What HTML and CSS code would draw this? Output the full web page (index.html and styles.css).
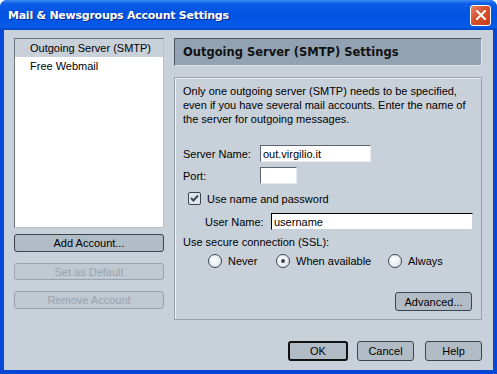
FILE: index.html
```html
<!DOCTYPE html>
<html lang="en">
<head>
  <meta charset="UTF-8" />
  <title>Mail &amp; Newsgroups Account Settings</title>
  <link rel="stylesheet" href="styles.css">
</head>
<body>

  <div class="window">
    <div class="titlebar">
      <span class="title">Mail &amp; Newsgroups Account Settings</span>
      <span class="close-btn" aria-label="Close">
        <svg viewBox="0 0 10 10" width="10" height="10">
          <path d="M1 1 L9 9 M9 1 L1 9" stroke="#fff" stroke-width="2" stroke-linecap="square" />
        </svg>
      </span>
    </div>

    <div class="client">
      <div class="main">
        <!-- account list and its buttons -->
        <div class="left-col">
          <ul class="account-list">
            <li class="selected">Outgoing Server (SMTP)</li>
            <li>Free Webmail</li>
          </ul>
          <button class="btn wide">Add Account...</button>
          <button class="btn wide" disabled>Set as Default</button>
          <button class="btn wide" disabled>Remove Account</button>
        </div>

        <!-- settings panel -->
        <div class="right-col">
          <div class="panel-header">Outgoing Server (SMTP) Settings</div>
          <div class="panel-box">
            <p class="intro">Only one outgoing server (SMTP) needs to be specified, even if you have several mail accounts. Enter the name of the server for outgoing messages.</p>

            <div class="field-row server-row">
              <label class="field-label">Server Name:</label>
              <input class="text-input server-input" type="text" value="out.virgilio.it">
            </div>
            <div class="field-row port-row">
              <label class="field-label">Port:</label>
              <input class="text-input port-input" type="text" value="">
            </div>

            <div class="check-row">
              <span class="checkbox">
                <svg viewBox="0 0 9 9" width="9" height="9">
                  <path d="M1 4 L3.5 6.5 L8 1.5" stroke="#3a4858" stroke-width="2" fill="none" />
                </svg>
              </span>
              <span>Use name and password</span>
            </div>
            <div class="field-row user-row">
              <label class="user-label">User Name:</label>
              <input class="text-input user-input" type="text" value="username">
            </div>

            <div class="ssl-label">Use secure connection (SSL):</div>
            <div class="radio-row">
              <span class="radio-item never"><span class="radio"></span>Never</span>
              <span class="radio-item when"><span class="radio checked"></span>When available</span>
              <span class="radio-item"><span class="radio"></span>Always</span>
            </div>

            <div class="advanced-row">
              <button class="btn advanced">Advanced...</button>
            </div>
          </div>
        </div>
      </div>

      <div class="footer">
        <button class="btn dlg default">OK</button>
        <button class="btn dlg">Cancel</button>
        <button class="btn dlg help">Help</button>
      </div>
    </div>
  </div>

</body>
</html>
```

FILE: styles.css
```css
body {
  margin: 0;
  font-family: 'Liberation Sans', Arial, sans-serif;
  font-size: 11px;
  color: #000;
  background: #fff;
}

.window {
  width: 497px;
  height: 374px;
  display: flex;
  flex-direction: column;
  background: #0846d8;
  box-sizing: border-box;
  padding: 0 4px 4px 4px;
  border-radius: 7px 7px 0 0;
  overflow: hidden;
}

.titlebar {
  height: 30px;
  margin: 0 -4px;
  padding: 0 6px 0 8px;
  display: flex;
  align-items: center;
  justify-content: space-between;
  background: linear-gradient(180deg, #3d8cf5 0%, #0b5ee6 12%, #0253e3 40%, #0457e6 75%, #0a5be4 90%, #0045cc 100%);
}

.title {
  color: #fff;
  font-family: 'DejaVu Sans', sans-serif;
  font-weight: bold;
  font-size: 11px;
  letter-spacing: -0.25px;
  text-shadow: 1px 1px 0 #0a2a8a;
}

.close-btn {
  width: 21px;
  height: 21px;
  box-sizing: border-box;
  border: 1px solid #fff;
  border-radius: 3px;
  background: linear-gradient(135deg, #e8836a 0%, #d8502c 45%, #c83e1c 100%);
  display: flex;
  align-items: center;
  justify-content: center;
}

.client {
  flex: 1;
  background: #c8d0d9;
  padding: 8px 11px 9px 10px;
  display: flex;
  flex-direction: column;
}

.main {
  display: flex;
  gap: 10px;
  height: 282px;
}

.left-col {
  width: 150px;
  display: flex;
  flex-direction: column;
}

.account-list {
  list-style: none;
  margin: 0 0 6px 0;
  padding: 0;
  height: 194px;
  box-sizing: border-box;
  background: #fff;
  border: 1px solid #6a747e;
  border-right-color: #b8c0c8;
  border-bottom-color: #b8c0c8;
}

.account-list li {
  height: 18px;
  line-height: 18px;
  padding-left: 15px;
}

.account-list li.selected {
  background: #c8d0d9;
}

.btn {
  font-family: 'Liberation Sans', Arial, sans-serif;
  font-size: 11px;
  color: #000;
  background: #b2bcc7;
  border: 1px solid #3a4450;
  border-radius: 3px;
  padding: 0;
  height: 18px;
  box-sizing: border-box;
}

.btn:disabled {
  color: #98a4b0;
  border-color: #9aa4ae;
  background: #c0c8d1;
}

.btn.wide {
  width: 150px;
  margin-bottom: 11px;
}

.right-col {
  width: 308px;
  display: flex;
  flex-direction: column;
  gap: 11px;
}

.panel-header {
  height: 28px;
  box-sizing: border-box;
  background: #92a2b3;
  border: 1px solid #4c5662;
  border-right-color: #e4e8ec;
  border-bottom-color: #e4e8ec;
  padding-left: 8px;
  display: flex;
  align-items: center;
  font-family: 'DejaVu Sans', sans-serif;
  font-weight: bold;
  font-size: 11.5px;
  color: #111;
}

.panel-box {
  flex: 1;
  box-sizing: border-box;
  border: 1px solid #98a2ac;
  box-shadow: inset 1px 1px 0 #eef1f4;
  padding: 6px 8px 0 8px;
  display: flex;
  flex-direction: column;
}

.intro {
  margin: 0;
  line-height: 14px;
  width: 296px;
}

.field-row {
  display: flex;
  align-items: center;
}

.field-label {
  width: 77px;
}

.text-input {
  font-family: 'Liberation Sans', Arial, sans-serif;
  font-size: 11px;
  height: 17px;
  box-sizing: border-box;
  border: 1px solid #5c6670;
  border-right-color: #e8ecf0;
  border-bottom-color: #e8ecf0;
  padding: 0 2px;
  margin: 0;
  background: #fff;
}

.server-row {
  margin-top: 19px;
}

.server-input {
  width: 111px;
}

.port-row {
  margin-top: 5px;
}

.port-input {
  width: 37px;
}

.check-row {
  display: flex;
  align-items: center;
  gap: 6px;
  margin-top: 8px;
  padding-left: 5px;
}

.checkbox {
  width: 13px;
  height: 13px;
  box-sizing: border-box;
  border: 1px solid #3a4450;
  border-radius: 2px;
  background: #e0e6ec;
  display: flex;
  align-items: center;
  justify-content: center;
}

.user-row {
  margin-top: 8px;
  padding-left: 22px;
}

.user-label {
  width: 66px;
}

.user-input {
  width: 202px;
  border: 1px solid #000;
  border-right-color: #c8d0d9;
  border-bottom-color: #c8d0d9;
}

.ssl-label {
  margin-top: 6px;
}

.radio-row {
  display: flex;
  margin-top: 6px;
  padding-left: 25px;
}

.radio-item {
  display: flex;
  align-items: center;
  gap: 6px;
}

.radio-item.never {
  width: 68px;
}

.radio-item.when {
  width: 112px;
}

.radio {
  width: 14px;
  height: 14px;
  box-sizing: border-box;
  border: 1px solid #3a4450;
  border-radius: 50%;
  background: radial-gradient(circle at 40% 40%, #ffffff 0%, #e6ecf0 60%, #c4ccd4 100%);
  display: flex;
  align-items: center;
  justify-content: center;
}

.radio.checked::after {
  content: "";
  width: 4px;
  height: 4px;
  border-radius: 50%;
  background: #3a4450;
}

.advanced-row {
  margin-top: auto;
  margin-bottom: 8px;
  display: flex;
  justify-content: flex-end;
}

.btn.advanced {
  width: 77px;
  height: 19px;
  margin-right: 1px;
}

.footer {
  margin-top: auto;
  display: flex;
  justify-content: flex-end;
  gap: 9px;
}

.btn.dlg {
  width: 57px;
  height: 20px;
}

.btn.default {
  width: 60px;
  border-width: 2px;
  border-color: #111;
}

.btn.help {
  margin-left: 2px;
}
```
